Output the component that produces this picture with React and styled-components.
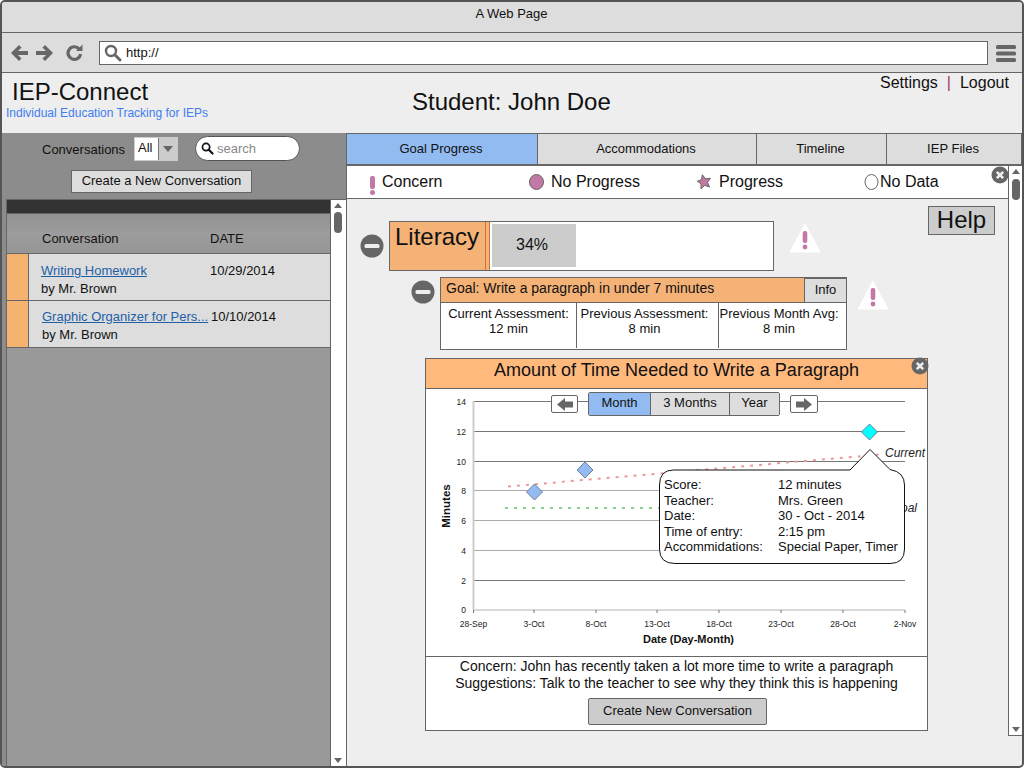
import React from 'react';
import styled, { createGlobalStyle } from 'styled-components';

const Global = createGlobalStyle`
  html, body { margin: 0; padding: 0; width: 1024px; height: 768px; overflow: hidden; background: #fff; }
  body { font-family: "Liberation Sans", Arial, sans-serif; color: #111; }
  * { box-sizing: border-box; }
`;

const Win = styled.div`
  width: 1024px; height: 768px; border: 2px solid #555; border-radius: 5px; overflow: hidden;
  display: flex; flex-direction: column; background: #eee;
`;
const TitleBar = styled.div`
  height: 31px; background: #ddd; border-bottom: 1px solid #666; text-align: center;
  font-size: 13px; line-height: 23px; padding-right: 1px;
`;
const Toolbar = styled.div`
  height: 40px; background: #ddd; border-bottom: 1px solid #666; display: flex; align-items: center;
  padding-left: 9px; flex: none;
`;
const NavIcon = styled.svg`
  display: block; flex: none; margin-right: ${p => p.$gap}px;
`;
const Address = styled.div`
  width: 889px; height: 24px; background: #fff; border: 1px solid #666; display: flex; align-items: center;
  padding-left: 4px; font-size: 13px; gap: 4px; margin-right: 8px;
`;
const Header = styled.div`
  height: 60px; background: #eee; flex: none; display: grid;
  grid-template-columns: 400px 1fr 145px;
`;
const Brand = styled.div`padding: 5px 0 0 4px;`;
const BrandName = styled.div`font-size: 24px; line-height: 28px; padding-left: 6px;`;
const Tag = styled.div`font-size: 12px; line-height: 15px; color: #3f7df0;`;
const Student = styled.div`font-size: 24px; line-height: 28px; padding: 15px 0 0 10px;`;
const Links = styled.div`font-size: 16px; line-height: 20px; display: flex; gap: 9px; margin-left: 3px;`;
const Sep = styled.span`color: #a33a6a;`;

const Body = styled.div`flex: 1; display: flex; min-height: 0;`;
const Left = styled.div`
  width: 345px; flex: none; background: #8c8c8c; border-right: 1px solid #666; display: flex; flex-direction: column;
`;
const ConvRow = styled.div`
  height: 37px; display: flex; align-items: flex-start; padding: 3px 0 0 40px; font-size: 13px; flex: none;
`;
const ConvLabel = styled.div`line-height: 24px; margin-top: 2px; width: 92px;`;
const Select = styled.div`
  width: 44px; height: 24px; background: #fff; border: 1px solid #ccc; display: flex; font-size: 13px; margin-top: 1px;
`;
const SelectValue = styled.div`flex: 1; padding-left: 3px; line-height: 20px;`;
const SelectBtn = styled.div`
  width: 19px; background: #ccc; border-left: 1px solid #777; display: flex; align-items: center; justify-content: center;
  &::after { content: ""; border: 5px solid transparent; border-top: 6px solid #666; border-bottom: 0; }
`;
const Search = styled.div`
  width: 105px; height: 25px; margin-left: 17px; background: #fff; border: 1px solid #555; border-radius: 13px;
  display: flex; align-items: center; padding-left: 5px; gap: 3px; color: #888; font-size: 13px;
`;
const NewConvWrap = styled.div`padding-left: 69px; height: 29px; flex: none;`;
const GreyButton = styled.div`
  display: flex; align-items: center; justify-content: center; font-size: 13px; background: #ddd; border: 1px solid #666;
  padding-bottom: 2px; width: ${p => p.$w}px; height: ${p => p.$h}px; border-radius: ${p => p.$r || 0}px;
`;
const ListWrap = styled.div`flex: 1; display: flex; min-height: 0; padding-left: 4px;`;
const List = styled.div`width: 324px; background: #999; border-left: 1px solid #666; display: flex; flex-direction: column;`;
const DarkBar = styled.div`height: 15px; background: #333; border-top: 1px solid #666; border-bottom: 1px solid #666; flex: none;`;
const ListHead = styled.div`
  height: 40px; background: linear-gradient(#939393, #9c9c9c 50%, #969696); border-bottom: 1px solid #666; flex: none;
  display: grid; grid-template-columns: 168px 1fr; padding: 16px 0 0 35px; font-size: 13px; line-height: 17px;
`;
const Row = styled.div`
  height: 47px; display: flex; border-bottom: 1px solid #666; background: #ddd; flex: none;
`;
const RowFlag = styled.div`width: 22px; background: #f6b36f; border-right: 1px solid #666; border-bottom: 1px solid #666; margin-bottom: -1px;`;
const RowMain = styled.div`
  flex: 1; display: grid; align-content: start; grid-template-columns: ${p => p.$col}px 1fr; padding: ${p => p.$top}px 0 0 ${p => p.$pad}px; font-size: 13px; line-height: 18px;
`;
const RowLink = styled.a`color: #1f5fa8; text-decoration: underline; white-space: nowrap;`;
const Scroll = styled.div`
  width: ${p => p.$w}px; flex: none; background: #fff; border: 1px solid #666; border-width: ${p => p.$b}; position: relative;
`;
const UpArrow = styled.div`
  position: absolute; left: 3px; top: 3px; border: 4px solid transparent; border-bottom: 5px solid #666; border-top: 0;
`;
const DownArrow = styled.div`
  position: absolute; left: 3px; bottom: 3px; border: 4px solid transparent; border-top: 5px solid #666; border-bottom: 0;
`;
const Thumb = styled.div`
  position: absolute; left: 3px; top: ${p => p.$top}px; width: 8px; height: 21px; background: #666; border-radius: 4px;
`;

const Right = styled.div`flex: 1; display: flex; flex-direction: column; min-width: 0;`;
const Tabs = styled.div`height: 33px; display: flex; flex: none; border-top: 1px solid #666; border-bottom: 2px solid #666;`;
const Tab = styled.div`
  width: ${p => p.$w}px; flex: ${p => p.$grow ? 1 : 'none'}; background: ${p => p.$on ? '#92bbf1' : '#ddd'}; border-right: 1px solid #666;
  display: flex; align-items: center; justify-content: center; font-size: 13px; padding: 0 2px 2px 0;
`;
const ScrollRegion = styled.div`height: 570px; display: flex; flex: none;`;
const Content = styled.div`flex: 1; min-width: 0; display: flex; flex-direction: column; position: relative;`;
const Legend = styled.div`
  height: 33px; background: #fff; border-bottom: 1px solid #666; display: grid; grid-template-columns: 160px 168px 167px 1fr;
  padding-left: 22px; font-size: 16px; flex: none;
`;
const LegendItem = styled.div`display: flex; align-items: flex-start; gap: ${p => p.$gap}px; line-height: 32px;`;
const LegendIcon = styled.svg`display: block; margin-top: ${p => p.$top}px; flex: none;`;
const CloseBadge = styled.svg`position: absolute; right: ${p => p.$r}px; top: ${p => p.$t}px;`;
const HelpBtn = styled.div`
  position: absolute; right: 13px; top: 40px; width: 67px; height: 29px; background: #ccc; border: 1px solid #666;
  font-size: 24px; line-height: 26px; text-align: center;
`;
const Main = styled.div`flex: 1; padding: 22px 0 0 13px; min-height: 0;`;
const LitRow = styled.div`display: flex; align-items: center; height: 50px;`;
const Lit = styled.div`
  width: 385px; height: 50px; margin-left: 5px; background: #fff; border: 1px solid #666; display: flex; align-items: stretch;
`;
const LitName = styled.div`
  width: 96px; background: #f5b277; border-right: 1px solid #c8743a; font-size: 24px; line-height: 29px; padding-left: 5px;
`;
const LitStrip = styled.div`width: 4px; background: #f5b277; border-right: 1px solid #c8743a;`;
const Bar = styled.div`
  width: 84px; margin: 2px 0 3px 2px; background: #ccc; font-size: 16px; line-height: 41px; padding-left: 24px;
`;
const GoalRow = styled.div`display: flex; height: 73px; margin: 6px 0 0 51px; align-items: flex-start;`;
const MinusSvg = styled.svg`margin-top: ${p => p.$top}px; flex: none;`;
const Goal = styled.div`width: 407px; height: 73px; margin-left: 5px; border: 1px solid #666; background: #fff; flex: none;`;
const GoalHead = styled.div`
  height: 25px; background: #f5b277; border-bottom: 1px solid #666; display: flex; justify-content: space-between;
  font-size: 14px; line-height: 21px; padding-left: 5px;
`;
const InfoBtn = styled.div`
  width: 42px; background: #ddd; border-left: 1px solid #666; border-top: 1px solid #666; font-size: 13px; text-align: center; line-height: 22px;
`;
const Cells = styled.div`display: grid; grid-template-columns: 135px 142px 1fr; font-size: 13px; line-height: 15px;`;
const Cell = styled.div`
  height: 45px; text-align: center; padding: 3px ${p => p.$pr || 0}px 0 0; white-space: nowrap; border-left: ${p => p.$first ? 0 : '1px solid #666'};
`;
const Warn = styled.svg`flex: none; align-self: flex-start; margin-left: ${p => p.$ml}px; margin-top: ${p => p.$mt}px;`;
const Card = styled.div`
  width: 503px; height: 373px; margin: 8px 0 0 65px; background: #fff; border: 1px solid #666; display: flex; flex-direction: column; position: relative;
`;
const CardHead = styled.div`
  height: 30px; background: #ffb97d; border-bottom: 1px solid #666; font-size: 18px; line-height: 23px; text-align: center; flex: none;
`;
const Chart = styled.div`height: 268px; position: relative; border-bottom: 1px solid #666; flex: none;`;
const ChartSvg = styled.svg`display: block;`;
const Period = styled.div`
  position: absolute; left: 125px; top: 3px; display: flex; align-items: center;
`;
const ArrowBtn = styled.div`
  width: ${p => p.$w}px; height: 18px; background: #fff; border: 1px solid #666; border-radius: 2px; display: flex; align-items: center; justify-content: center;
  margin: ${p => p.$m};
`;
const Seg = styled.div`display: flex; height: 24px; border: 1px solid #666; border-radius: 2px;`;
const SegItem = styled.div`
  width: ${p => p.$w}px; background: ${p => p.$on ? '#92bbf1' : '#ddd'}; border-left: ${p => p.$first ? 0 : '1px solid #666'};
  font-size: 13px; display: flex; align-items: center; justify-content: center; padding-bottom: 3px;
`;
const Tip = styled.div`
  position: absolute; left: 233px; top: 60px; width: 247px; height: 116px;
`;
const TipShape = styled.svg`position: absolute; inset: 0;`;
const TipText = styled.div`
  position: absolute; left: 5px; top: 28px; display: grid; grid-template-columns: 114px 1fr; font-size: 13px; line-height: 15.5px; white-space: nowrap;
`;
const Notes = styled.div`flex: 1; text-align: center; font-size: 14px; line-height: 17px; padding-top: 1px;`;
const NoteBtnWrap = styled.div`display: flex; justify-content: center; margin-top: 6px; padding-left: 2px;`;
const CreateBtn = styled(GreyButton)`background: #ccc;`;

const Minus = ({ top }) => (
  <MinusSvg $top={top} width="24" height="24" viewBox="0 0 24 24">
    <circle cx="12" cy="12" r="11.5" fill="#666" />
    <rect x="4.5" y="10" width="15" height="4" rx="1.5" fill="#eee" />
  </MinusSvg>
);
const WarnIcon = ({ ml, mt }) => (
  <Warn $ml={ml} $mt={mt} width="32" height="30" viewBox="0 0 32 30">
    <path d="M16 1 L31 29 L1 29 Z" fill="#fff" stroke="#fff" strokeLinejoin="round" />
    <rect x="13.7" y="8" width="4.6" height="12" rx="2" fill="#c279a5" />
    <circle cx="16" cy="24" r="2.4" fill="#c279a5" />
  </Warn>
);
const Close = ({ r, t }) => (
  <CloseBadge $r={r} $t={t} width="18" height="18" viewBox="0 0 18 18">
    <circle cx="9" cy="9" r="8.5" fill="#666" />
    <path d="M5.8 5.8 L12.2 12.2 M12.2 5.8 L5.8 12.2" stroke="#eee" strokeWidth="2.6" />
  </CloseBadge>
);
const BigArrow = ({ dir }) => (
  <svg width="16" height="13" viewBox="0 0 16 13">
    <path d={dir === 'l' ? 'M0 6.5 L8 0 V3.5 H16 V9.5 H8 V13 Z' : 'M16 6.5 L8 0 V3.5 H0 V9.5 H8 V13 Z'} fill="#666" />
  </svg>
);
const Mag = ({ s = 18, c = '#666' }) => (
  <svg width={s} height={s} viewBox="0 0 18 18" style={{ flex: 'none' }}>
    <circle cx="7" cy="7" r="5" fill="none" stroke={c} strokeWidth="2.4" />
    <path d="M10.8 10.8 L16 16" stroke={c} strokeWidth="3" strokeLinecap="round" />
  </svg>
);

const xs = [473.5, 534, 596, 657, 719, 781, 843, 905];
const xl = ['28-Sep', '3-Oct', '8-Oct', '13-Oct', '18-Oct', '23-Oct', '28-Oct', '2-Nov'];
const grid = [[14, 401.5, '#777'], [12, 431.5, '#777'], [10, 461.5, '#777'], [8, 490.5, '#aaa'], [6, 520.5, '#aaa'], [4, 550.5, '#aaa'], [2, 580.5, '#777']];

const Diamond = ({ x, y, fill }) => (
  <path d={`M${x} ${y - 8} L${x + 8} ${y} L${x} ${y + 8} L${x - 8} ${y} Z`} fill={fill} stroke="#6b7f99" />
);

const ChartDrawing = () => (
  <ChartSvg width="501" height="268" viewBox="426 389 501 268" fontFamily="'Liberation Sans', sans-serif">
    {grid.map(([v, y, c]) => (
      <g key={v}>
        <line x1="473" x2="905" y1={y} y2={y} stroke={c} />
        <text x="466" y={y + 3} fontSize="8.5" textAnchor="end" fill="#222">{v}</text>
      </g>
    ))}
    <text x="466" y="613" fontSize="8.5" textAnchor="end" fill="#222">0</text>
    <line x1="473.5" x2="473.5" y1="401" y2="610" stroke="#ccc" strokeWidth="2" />
    <line x1="473" x2="905" y1="610" y2="610" stroke="#ccc" strokeWidth="1.5" />
    {xs.map((x, i) => (
      <g key={x}>
        <line x1={x} x2={x} y1="610" y2="613" stroke="#777" />
        <text x={x} y="627" fontSize="8.5" textAnchor="middle" fill="#222">{xl[i]}</text>
      </g>
    ))}
    <text transform="translate(450 506) rotate(-90)" textAnchor="middle" fontSize="11.5" fontWeight="700" fill="#111">Minutes</text>
    <text x="688.5" y="643" textAnchor="middle" fontSize="11" fontWeight="700" fill="#111">Date (Day-Month)</text>
    <line x1="508" y1="486.5" x2="880" y2="454.5" stroke="#ea9a9a" strokeWidth="2" strokeDasharray="3 6" />
    <line x1="505" y1="508" x2="890" y2="508" stroke="#86d08c" strokeWidth="2" strokeDasharray="3 6" />
    <Diamond x={534.5} y={492} fill="#92bbf1" />
    <Diamond x={585} y={470} fill="#92bbf1" />
    <Diamond x={869.5} y={432} fill="#00ffff" />
    <text x="925" y="457" textAnchor="end" fontSize="12" fontStyle="italic" fill="#222">Current</text>
    <text x="917" y="512" textAnchor="end" fontSize="12" fontStyle="italic" fill="#222">Goal</text>
  </ChartSvg>
);

export default function App() {
  return (
    <Win>
      <Global />
      <TitleBar>A Web Page</TitleBar>
      <Toolbar>
        <NavIcon $gap={8} width="17" height="16" viewBox="0 0 17 16"><path d="M0 8 L8 0 L10.5 2.5 L7 6 H17 V10 H7 L10.5 13.5 L8 16 Z" fill="#666" /></NavIcon>
        <NavIcon $gap={13} width="17" height="16" viewBox="0 0 17 16"><path d="M17 8 L9 0 L6.5 2.5 L10 6 H0 V10 H10 L6.5 13.5 L9 16 Z" fill="#666" /></NavIcon>
        <NavIcon $gap={16} width="17" height="17" viewBox="0 0 17 17">
          <path d="M13.2 5 A6.3 6.3 0 1 0 14.6 10" fill="none" stroke="#666" strokeWidth="3.2" />
          <path d="M10 7 H16.5 V0.5 Z" fill="#666" />
        </NavIcon>
        <Address><Mag />http://</Address>
        <NavIcon $gap={0} width="20" height="18" viewBox="0 0 20 18">
          <rect y="1" width="20" height="4" rx="1.5" fill="#666" />
          <rect y="7.5" width="20" height="4" rx="1.5" fill="#666" />
          <rect y="14" width="20" height="4" rx="1.5" fill="#666" />
        </NavIcon>
      </Toolbar>
      <Header>
        <Brand>
          <BrandName>IEP-Connect</BrandName>
          <Tag>Individual Education Tracking for IEPs</Tag>
        </Brand>
        <Student>Student: John Doe</Student>
        <Links><span>Settings</span><Sep>|</Sep><span>Logout</span></Links>
      </Header>
      <Body>
        <Left>
          <ConvRow>
            <ConvLabel>Conversations</ConvLabel>
            <Select><SelectValue>All</SelectValue><SelectBtn /></Select>
            <Search><Mag s={13} c="#111" />search</Search>
          </ConvRow>
          <NewConvWrap><GreyButton $w={181} $h={23}>Create a New Conversation</GreyButton></NewConvWrap>
          <ListWrap>
            <List>
              <DarkBar />
              <ListHead><span>Conversation</span><span>DATE</span></ListHead>
              <Row>
                <RowFlag />
                <RowMain $col={169} $pad={12} $top={8}>
                  <RowLink>Writing Homework</RowLink><span>10/29/2014</span>
                  <span>by Mr. Brown</span>
                </RowMain>
              </Row>
              <Row>
                <RowFlag />
                <RowMain $col={169} $pad={13} $top={7}>
                  <RowLink>Graphic Organizer for Pers...</RowLink><span>10/10/2014</span>
                  <span>by Mr. Brown</span>
                </RowMain>
              </Row>
            </List>
            <Scroll $w={16} $b="1px 0 0 1px"><UpArrow /><Thumb $top={12} /><DownArrow /></Scroll>
          </ListWrap>
        </Left>
        <Right>
          <Tabs>
            <Tab $w={191} $on>Goal Progress</Tab>
            <Tab $w={219}>Accommodations</Tab>
            <Tab $w={130}>Timeline</Tab>
            <Tab $grow>IEP Files</Tab>
          </Tabs>
          <ScrollRegion>
            <Content>
              <Legend>
                <LegendItem $gap={6}>
                  <LegendIcon $top={10} width="7" height="19" viewBox="0 0 7 19">
                    <rect x="1" y="0" width="5" height="13" rx="2" fill="#c279a5" />
                    <circle cx="3.5" cy="16.5" r="2.5" fill="#c279a5" />
                  </LegendIcon>
                  Concern
                </LegendItem>
                <LegendItem $gap={7}>
                  <LegendIcon $top={8} width="15" height="16" viewBox="0 0 15 16">
                    <ellipse cx="7.5" cy="8" rx="7" ry="7.5" fill="#c279a5" stroke="#666" />
                  </LegendIcon>
                  No Progress
                </LegendItem>
                <LegendItem $gap={7}>
                  <LegendIcon $top={8} width="15" height="17" viewBox="0 0 15 17">
                    <path d="M5.4 0.7 L8.4 4.8 L13.5 4.3 L10.5 8.4 L12.6 13 L7.7 11.4 L4 14.9 L4 9.8 L0.3 7.2 L4.4 5.7 Z" fill="#c279a5" stroke="#666" strokeLinejoin="round" />
                  </LegendIcon>
                  Progress
                </LegendItem>
                <LegendItem $gap={1}>
                  <LegendIcon $top={8} width="15" height="16" viewBox="0 0 15 16">
                    <ellipse cx="7.5" cy="8" rx="6.5" ry="7.5" fill="#fff" stroke="#666" />
                  </LegendIcon>
                  No Data
                </LegendItem>
              </Legend>
              <Close r={-1} t={0} />
              <HelpBtn>Help</HelpBtn>
              <Main>
                <LitRow>
                  <Minus top={0} />
                  <Lit>
                    <LitName>Literacy</LitName>
                    <LitStrip />
                    <Bar>34%</Bar>
                  </Lit>
                  <WarnIcon ml={15} mt={2} />
                </LitRow>
                <GoalRow>
                  <Minus top={3} />
                  <Goal>
                    <GoalHead>Goal: Write a paragraph in under 7 minutes<InfoBtn>Info</InfoBtn></GoalHead>
                    <Cells>
                      <Cell $first>Current Assessment:<br />12 min</Cell>
                      <Cell $pr={6}>Previous Assessment:<br />8 min</Cell>
                      <Cell $pr={7}>Previous Month Avg:<br />8 min</Cell>
                    </Cells>
                  </Goal>
                  <WarnIcon ml={10} mt={3} />
                </GoalRow>
                <Card>
                  <CardHead>Amount of Time Needed to Write a Paragraph</CardHead>
                  <Close r={-2} t={-2} />
                  <Chart>
                    <ChartDrawing />
                    <Period>
                      <ArrowBtn $w={27} $m="0 10px 0 0"><BigArrow dir="l" /></ArrowBtn>
                      <Seg>
                        <SegItem $w={61} $first $on>Month</SegItem>
                        <SegItem $w={79}>3 Months</SegItem>
                        <SegItem $w={50}>Year</SegItem>
                      </Seg>
                      <ArrowBtn $w={28} $m="0 0 0 10px"><BigArrow dir="r" /></ArrowBtn>
                    </Period>
                    <Tip>
                      <TipShape width="247" height="116" viewBox="0 0 247 116">
                        <path d="M14.5 21 H191 L211 0.5 L231 20.5 Q245.5 23 245.5 36 V100 Q245.5 114.5 231 114.5 H16 Q0.5 114.5 0.5 100 V36 Q0.5 21 14.5 21 Z" fill="#fff" stroke="#111" />
                      </TipShape>
                      <TipText>
                        <span>Score:</span><span>12 minutes</span>
                        <span>Teacher:</span><span>Mrs. Green</span>
                        <span>Date:</span><span>30 - Oct - 2014</span>
                        <span>Time of entry:</span><span>2:15 pm</span>
                        <span>Accommidations:</span><span>Special Paper, Timer</span>
                      </TipText>
                    </Tip>
                  </Chart>
                  <Notes>
                    Concern: John has recently taken a lot more time to write a paragraph<br />
                    Suggestions: Talk to the teacher to see why they think this is happening
                    <NoteBtnWrap><CreateBtn $w={179} $h={27} $r={2}>Create New Conversation</CreateBtn></NoteBtnWrap>
                  </Notes>
                </Card>
              </Main>
            </Content>
            <Scroll $w={14} $b="0 0 1px 1px"><UpArrow /><Thumb $top={13} /><DownArrow /></Scroll>
          </ScrollRegion>
        </Right>
      </Body>
    </Win>
  );
}
